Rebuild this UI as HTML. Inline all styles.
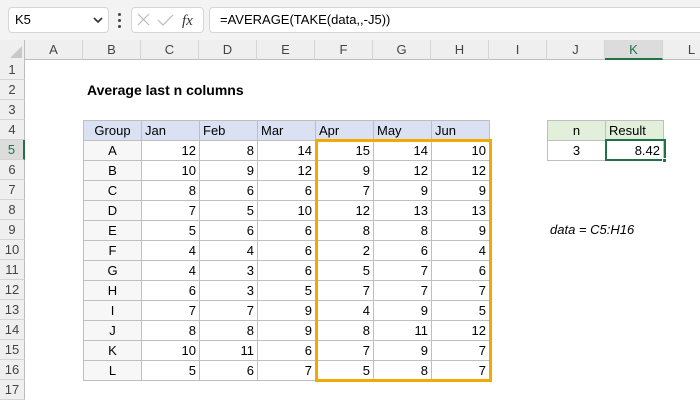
<!DOCTYPE html><html><head><style>
body{margin:0;width:700px;height:400px;overflow:hidden;background:#fff;font-family:"Liberation Sans",Calibri,sans-serif;position:relative}
.a{position:absolute;box-sizing:border-box}
.c{position:absolute;box-sizing:border-box;font-size:13px;line-height:19px;height:21px;padding:0 3px;white-space:nowrap}
.r{text-align:right}.m{text-align:center}
</style></head><body>
<div class="a" style="left:0;top:0;width:700px;height:40px;background:#f3f3f3"></div>
<div class="a" style="left:8px;top:7px;width:101px;height:26px;background:#fff;border:1px solid #d6d6d6;border-radius:4px;font-size:13px;line-height:24px;padding-left:6px">K5</div>
<svg class="a" style="left:93px;top:17px" width="10" height="7"><path d="M1 1 L5 5 L9 1" stroke="#333" stroke-width="1.6" fill="none"/></svg>
<div class="a" style="left:118px;top:13px;width:3px;height:3px;background:#444;border-radius:2px"></div>
<div class="a" style="left:118px;top:19px;width:3px;height:3px;background:#444;border-radius:2px"></div>
<div class="a" style="left:118px;top:25px;width:3px;height:3px;background:#444;border-radius:2px"></div>
<div class="a" style="left:131px;top:7px;width:73px;height:26px;background:#fff;border:1px solid #d6d6d6;border-radius:4px"></div>
<svg class="a" style="left:131px;top:7px" width="73" height="26"><path d="M7 7 L18 18 M18 7 L7 18" stroke="#bbb" stroke-width="1.2"/><path d="M27 13 L32 18 L42 8" stroke="#bbb" stroke-width="1.2" fill="none"/><text x="51" y="18" font-family="Liberation Serif" font-style="italic" font-size="15" fill="#333">fx</text></svg>
<div class="a" style="left:209px;top:7px;width:495px;height:26px;background:#fff;border:1px solid #d6d6d6;border-radius:4px;font-size:13px;line-height:24px;padding-left:10px">=AVERAGE(TAKE(data,,-J5))</div>
<div class="a" style="left:0;top:40px;width:700px;height:20px;background:#efefef;border-bottom:1px solid #bdbdbd"></div>
<div class="a" style="left:0;top:40px;width:25px;height:360px;background:#efefef;border-right:1px solid #bdbdbd"></div>
<svg class="a" style="left:10px;top:46px" width="13" height="13"><path d="M12 0 L12 12 L0 12Z" fill="#c8c8c8"/></svg>
<div id="g"></div>
<script>
var cols=["A","B","C","D","E","F","G","H","I","J","K","L"],x0=25,w=58,h='';
cols.forEach(function(c,i){var x=x0+i*w;h+='<div class="a" style="left:'+x+'px;top:40px;width:'+w+'px;height:20px;border-right:1px solid #d4d4d4;font-size:13px;line-height:20px;text-align:center;color:#444;'+(c=="K"?'background:#dcdcdc;border-bottom:2px solid #217346;color:#217346':'')+'">'+c+'</div>';});
for(var r=1;r<=17;r++){var y=60+(r-1)*20;h+='<div class="a" style="left:0;top:'+y+'px;width:25px;height:20px;border-bottom:1px solid #d4d4d4;font-size:13px;line-height:20px;text-align:center;color:#444;'+(r==5?'background:#dcdcdc;border-right:2px solid #217346;color:#217346':'border-right:1px solid #bdbdbd')+'">'+r+'</div>';}
var d=[["A",12,8,14,15,14,10],["B",10,9,12,9,12,12],["C",8,6,6,7,9,9],["D",7,5,10,12,13,13],["E",5,6,6,8,8,9],["F",4,4,6,2,6,4],["G",4,3,6,5,7,6],["H",6,3,5,7,7,7],["I",7,7,9,4,9,5],["J",8,8,9,8,11,12],["K",10,11,6,7,9,7],["L",5,6,7,5,8,7]];
var hd=["Group","Jan","Feb","Mar","Apr","May","Jun"];
function cell(ci,r,t,st){var x=x0+ci*w,y=60+(r-1)*20;return '<div class="c '+(st||'')+'" style="left:'+x+'px;top:'+y+'px;width:'+(w+1)+'px;border:1px solid #bfbfbf;'+(arguments[4]||'')+'">'+t+'</div>';}
hd.forEach(function(t,i){h+=cell(1+i,4,t,i==0?'m':'','background:#d9e1f2');});
d.forEach(function(row,ri){row.forEach(function(v,i){h+=cell(1+i,5+ri,v,i==0?'m':'r',i==0?'background:#f7f7f7':'');});});
h+=cell(9,4,"n","m","background:#e2efda");h+=cell(10,4,"Result","","background:#e2efda");
h+=cell(9,5,"3","m");h+=cell(10,5,"8.42","r");
h+='<div class="a" style="left:315px;top:139px;width:177px;height:243px;border:3px solid #f5a800"></div>';
h+='<div class="a" style="left:605px;top:139px;width:61px;height:22px;border:2px solid #217346"></div>';
h+='<div class="a" style="left:662px;top:158px;width:5px;height:5px;background:#217346;border:1px solid #fff"></div>';
h+='<div class="a" style="left:87px;top:82px;font-size:14px;font-weight:bold">Average last n columns</div>';
h+='<div class="a" style="left:550px;top:222px;font-size:13px;font-style:italic">data = C5:H16</div>';
document.getElementById('g').innerHTML=h;
</script>
</body></html>
